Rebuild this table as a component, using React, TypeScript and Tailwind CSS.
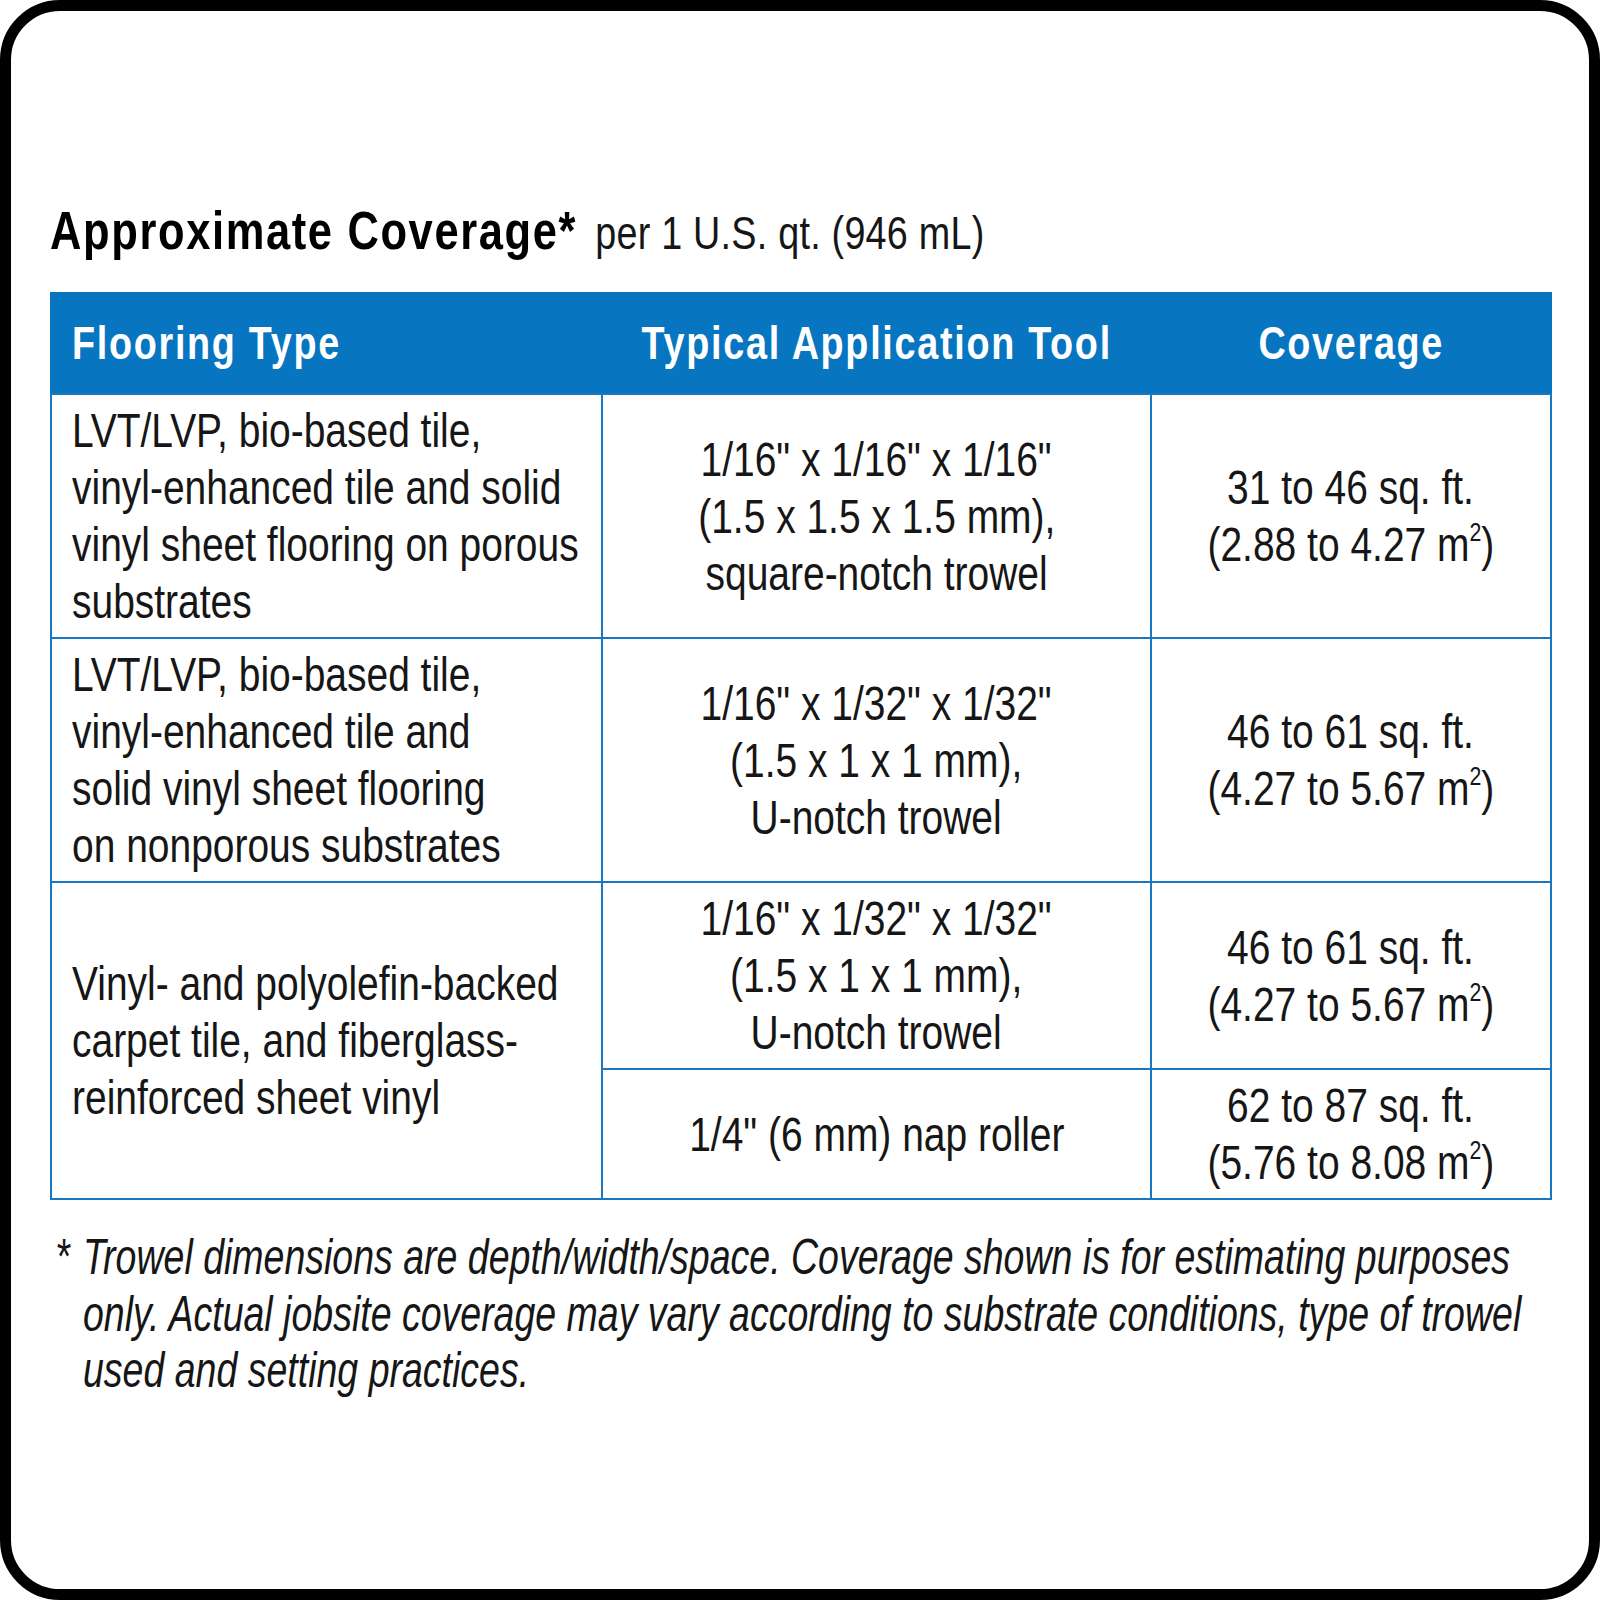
import React from "react";

const sans = "font-['Liberation_Sans',Arial,sans-serif]";

// the print uses a condensed face; Liberation Sans squeezed horizontally stands in for it
function Line({ children, center = false }: { children: React.ReactNode; center?: boolean }) {
  return (
    <div className={`whitespace-nowrap scale-x-[0.82] ${center ? "origin-center" : "origin-left"}`}>
      {children}
    </div>
  );
}

function Lines({ lines, center = false }: { lines: React.ReactNode[]; center?: boolean }) {
  return (
    <>
      {lines.map((l, i) => (
        <Line key={i} center={center}>
          {l}
        </Line>
      ))}
    </>
  );
}

const m2 = (a: string) => (
  <>
    ({a} m<sup className="relative -top-[3px] align-super text-[26px] leading-none">2</sup>)
  </>
);

export default function App() {
  const cellL = "bg-white pl-[20px] py-[7px] flex flex-col justify-center";
  const cellC = "bg-white py-[7px] flex flex-col justify-center items-center text-center";

  return (
    <div className={`w-[1600px] h-[1600px] overflow-hidden bg-white text-[#161616] ${sans}`}>
      <div className="h-full w-full overflow-hidden rounded-[60px] border-[11px] border-black pl-[39px] pr-[37px] pt-[190px]">
        <h1 className="w-max origin-left scale-x-[0.82] whitespace-nowrap text-[53px] leading-[60px]">
          <span className="font-bold tracking-[2px] text-black">Approximate Coverage*</span>
          <span className="ml-[22px] text-[46px] tracking-[0.3px]">per 1 U.S. qt. (946 mL)</span>
        </h1>

        <div className="mt-[29px] grid w-[1502px] grid-cols-[549px_547px_398px] gap-[2px] bg-[#1a78c2] p-[2px] text-[47.5px] leading-[57px]">
          <div className="col-span-3 -m-[2px] mb-0 box-content grid h-[99px] grid-cols-[549px_547px_398px] gap-[2px] bg-[#0775bf] px-[2px] pt-[2px] text-[46px] font-bold tracking-[2.1px] text-white">
            <div className="flex items-center pl-[20px]">
              <Line>Flooring Type</Line>
            </div>
            <div className="flex items-center justify-center">
              <Line center>Typical Application Tool</Line>
            </div>
            <div className="flex items-center justify-center">
              <Line center>Coverage</Line>
            </div>
          </div>

          <div className={cellL}>
            <Lines
              lines={[
                "LVT/LVP, bio-based tile,",
                "vinyl-enhanced tile and solid",
                "vinyl sheet flooring on porous",
                "substrates",
              ]}
            />
          </div>
          <div className={cellC}>
            <Lines center lines={['1/16" x 1/16" x 1/16"', "(1.5 x 1.5 x 1.5 mm),", "square-notch trowel"]} />
          </div>
          <div className={cellC}>
            <Lines center lines={["31 to 46 sq. ft.", m2("2.88 to 4.27")]} />
          </div>

          <div className={cellL}>
            <Lines
              lines={[
                "LVT/LVP, bio-based tile,",
                "vinyl-enhanced tile and",
                "solid vinyl sheet flooring",
                "on nonporous substrates",
              ]}
            />
          </div>
          <div className={cellC}>
            <Lines center lines={['1/16" x 1/32" x 1/32"', "(1.5 x 1 x 1 mm),", "U-notch trowel"]} />
          </div>
          <div className={cellC}>
            <Lines center lines={["46 to 61 sq. ft.", m2("4.27 to 5.67")]} />
          </div>

          <div className={`${cellL} row-span-2`}>
            <Lines
              lines={[
                "Vinyl- and polyolefin-backed",
                "carpet tile, and fiberglass-",
                "reinforced sheet vinyl",
              ]}
            />
          </div>
          <div className={cellC}>
            <Lines center lines={['1/16" x 1/32" x 1/32"', "(1.5 x 1 x 1 mm),", "U-notch trowel"]} />
          </div>
          <div className={cellC}>
            <Lines center lines={["46 to 61 sq. ft.", m2("4.27 to 5.67")]} />
          </div>

          <div className={cellC}>
            <Lines center lines={['1/4" (6 mm) nap roller']} />
          </div>
          <div className={`${cellC} py-[6px]`}>
            <Lines center lines={["62 to 87 sq. ft.", m2("5.76 to 8.08")]} />
          </div>
        </div>

        <div className="mt-[29px] flex text-[50px] italic leading-[56.5px]">
          <span className="w-[33px] shrink-0 origin-left scale-x-[0.75] pl-[9px] not-italic">*</span>
          <div>
            {[
              "Trowel dimensions are depth/width/space. Coverage shown is for estimating purposes",
              "only. Actual jobsite coverage may vary according to substrate conditions, type of trowel",
              "used and setting practices.",
            ].map((l) => (
              <div key={l} className="origin-left scale-x-[0.75] whitespace-nowrap">
                {l}
              </div>
            ))}
          </div>
        </div>
      </div>
    </div>
  );
}
